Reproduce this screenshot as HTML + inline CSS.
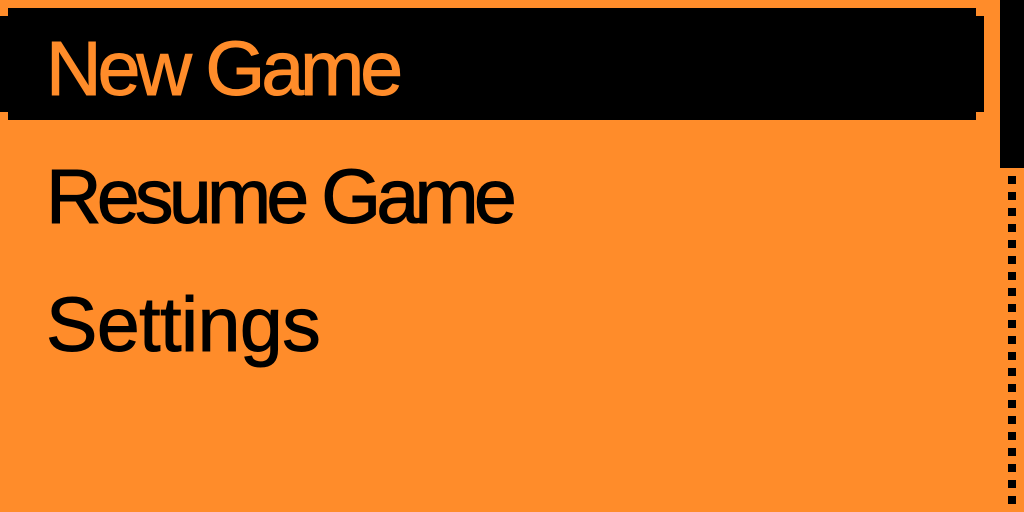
<!DOCTYPE html>
<html><head><style>
html,body{margin:0;padding:0}
body{width:1024px;height:512px;background:#FF8C2A;position:relative;overflow:hidden;font-family:"Liberation Sans",sans-serif}
.b{position:absolute;background:#000}
.t{position:absolute;left:46px;font-size:77px;line-height:77px;letter-spacing:-4px;white-space:nowrap;color:#000;-webkit-text-stroke:1px currentColor}
.d{position:absolute;left:1008px;width:8px;height:8px;background:#000}
</style></head><body>
<div class="b" style="left:8px;top:8px;width:968px;height:112px"></div>
<div class="b" style="left:0;top:16px;width:984px;height:96px"></div>
<div class="b" style="left:1000px;top:0;width:24px;height:168px"></div>
<div class="t" style="top:31px;color:#FF8C2A">New Game</div>
<div class="t" style="top:159px;letter-spacing:-4.7px">Resume Game</div>
<div class="t" style="top:287px;letter-spacing:-0.5px">Settings</div>
<div class="d" style="top:176px"></div><div class="d" style="top:192px"></div><div class="d" style="top:208px"></div><div class="d" style="top:224px"></div><div class="d" style="top:240px"></div><div class="d" style="top:256px"></div><div class="d" style="top:272px"></div><div class="d" style="top:288px"></div><div class="d" style="top:304px"></div><div class="d" style="top:320px"></div><div class="d" style="top:336px"></div><div class="d" style="top:352px"></div><div class="d" style="top:368px"></div><div class="d" style="top:384px"></div><div class="d" style="top:400px"></div><div class="d" style="top:416px"></div><div class="d" style="top:432px"></div><div class="d" style="top:448px"></div><div class="d" style="top:464px"></div><div class="d" style="top:480px"></div><div class="d" style="top:496px"></div>
</body></html>
